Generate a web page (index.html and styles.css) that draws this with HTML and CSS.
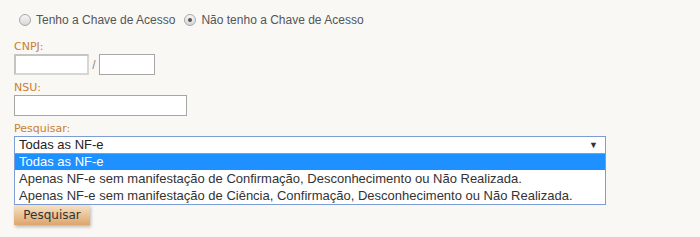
FILE: index.html
```html
<!DOCTYPE html>
<html lang="pt-BR">
<head>
    <meta charset="UTF-8">
    <title>Consulta NF-e</title>
    <link rel="stylesheet" href="styles.css">
</head>
<body>

<div class="consulta">
    <!-- Tipo de consulta -->
    <div class="tipo">
        <label class="opcao"><span class="radio"></span>Tenho a Chave de Acesso</label>
        <label class="opcao"><span class="radio marcado"></span>Não tenho a Chave de Acesso</label>
    </div>

    <div class="campo">
        <div class="rotulo">CNPJ:</div>
        <div class="linha-cnpj">
            <input type="text" class="txt cnpj">
            <span class="barra">/</span>
            <input type="text" class="txt filial">
        </div>
    </div>

    <div class="campo">
        <div class="rotulo">NSU:</div>
        <input type="text" class="txt nsu">
    </div>

    <div class="campo">
        <div class="rotulo">Pesquisar:</div>
        <div class="combo">
            <div class="combo-valor">Todas as NF-e <span class="seta">&#9660;</span></div>
            <div class="combo-lista">
                <div class="item ativo">Todas as NF-e</div>
                <div class="item">Apenas NF-e sem manifestação de Confirmação, Desconhecimento ou Não Realizada.</div>
                <div class="item">Apenas NF-e sem manifestação de Ciência, Confirmação, Desconhecimento ou Não Realizada.</div>
            </div>
        </div>
    </div>

    <button class="btn">Pesquisar</button>
</div>

</body>
</html>
```

FILE: styles.css
```css
body {
    margin: 0;
    background: #f9f8f5;
    font-family: "Liberation Sans", Arial, sans-serif;
    font-size: 13px;
    color: #333;
}
.consulta {
    padding: 11px 14px;
}
.tipo {
    display: flex;
    gap: 4px;
    color: #555;
    font-size: 12px;
    height: 18px;
    line-height: 18px;
}
.opcao {
    display: flex;
    align-items: center;
}
.radio {
    box-sizing: border-box;
    width: 12px;
    height: 12px;
    border: 1px solid #a8a8a8;
    border-radius: 50%;
    background: linear-gradient(#f6f6f6, #d8d8d8);
    margin: 0 5px 1px 5px;
    position: relative;
}
.radio.marcado::after {
    content: "";
    position: absolute;
    left: 3px;
    top: 3px;
    width: 4px;
    height: 4px;
    border-radius: 50%;
    background: #555;
}
.campo {
    margin-top: 12px;
}
.campo + .campo {
    margin-top: 7px;
}
.rotulo {
    font-family: "DejaVu Sans", Verdana, sans-serif;
    font-size: 11px;
    color: #c8802f;
    height: 12px;
    line-height: 12px;
    margin-bottom: 1px;
}
.linha-cnpj {
    display: flex;
    align-items: center;
}
.txt {
    box-sizing: border-box;
    display: block;
    height: 21px;
    border: 1px solid #a6a6a6;
    background: #fff;
    padding: 0 3px;
    margin: 0;
    font: inherit;
}
.cnpj {
    width: 75px;
    border: 2px solid #d6d6d2;
    border-top-color: #c4c4c0;
    border-left-color: #c4c4c0;
}
.barra {
    width: 10px;
    text-align: center;
    color: #888;
    font-size: 12px;
}
.filial {
    width: 56px;
}
.nsu {
    width: 173px;
}
.combo {
    width: 592px;
}
.combo-valor {
    box-sizing: border-box;
    height: 18px;
    line-height: 16px;
    border: 1px solid #7e9dd6;
    background: #fff;
    padding: 0 4px;
    font-size: 13px;
    color: #222;
    position: relative;
}
.seta {
    position: absolute;
    right: 7px;
    top: 0;
    font-size: 9px;
    color: #333;
}
.combo-lista {
    border: 1px solid #7e9dd6;
    border-top: 0;
    background: #fff;
}
.item {
    height: 17px;
    line-height: 17px;
    padding: 0 4px;
    color: #333;
    white-space: nowrap;
}
.item.ativo {
    height: 16px;
    line-height: 16px;
    background: #1e90ff;
    color: #fff;
}
.btn {
    width: 76px;
    height: 20px;
    border: 0;
    padding: 0;
    background: linear-gradient(#f7e2c4, #dca56c);
    box-shadow: 1px 2px 3px rgba(0, 0, 0, 0.25);
    font-family: "DejaVu Sans", Verdana, sans-serif;
    font-size: 12px;
    color: #333;
    display: block;
}
```
